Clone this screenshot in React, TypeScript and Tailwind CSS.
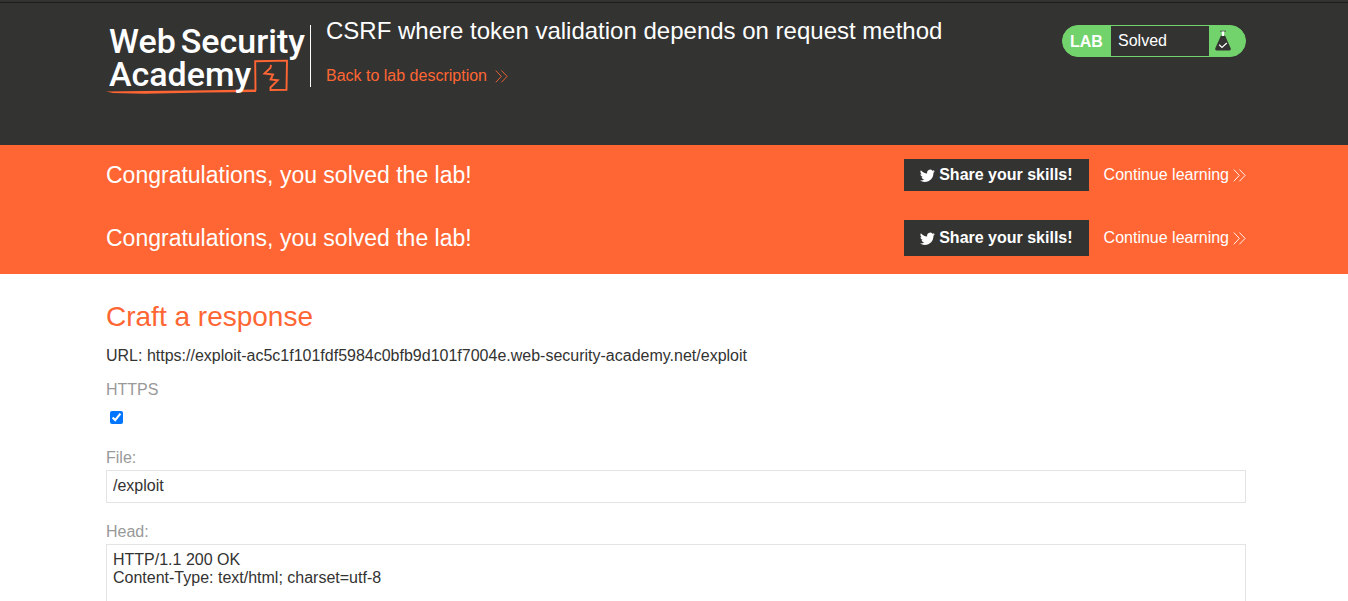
import React from "react";

function Chevrons({ className }: { className?: string }) {
  return (
    <svg
      viewBox="0 0 13 13"
      className={`h-[13px] w-[13px] ${className ?? ""}`}
      fill="none"
      stroke="currentColor"
      strokeWidth="0.9"
      aria-hidden="true"
    >
      <path d="M0.8 0.5 6.3 6.4 0.8 12.3M6.4 0.5 12.1 6.4 6.4 12.3" />
    </svg>
  );
}

function Bird() {
  return (
    <svg viewBox="0 0 24 24" className="h-[15px] w-[15px]" fill="currentColor" aria-hidden="true">
      <path d="M23.6 4.9c-.9.4-1.800.7-2.800.8 1-.6 1.800-1.600 2.200-2.700-1 .6-2 1-3.100 1.200a4.900 4.900 0 0 0-8.400 4.500C7.400 8.500 3.800 6.500 1.400 3.600.1 5.800.7 8.700 2.900 10.200c-.8 0-1.600-.2-2.200-.6-.1 2.300 1.600 4.400 3.900 4.900-.7.200-1.500.2-2.200.1.600 2 2.400 3.400 4.600 3.400-2.100 1.600-4.700 2.300-7.300 2C2.200 21.500 4.800 22.300 7.500 22.300c9.100 0 14.300-7.700 14-14.600.9-.7 1.700-1.600 2.100-2.800z" />
    </svg>
  );
}

function Flask() {
  return (
    <svg viewBox="0 0 18 22" className="h-[22px] w-[18px]" aria-hidden="true">
      <path d="M7 5.500h4l5.700 12.700c.4 1-.1 2.300-1.200 2.300h-13c-1.100 0-1.600-1.300-1.200-2.300z" fill="#333332" />
      <path d="M6 1.200h6" stroke="#555" strokeWidth="1" />
      <path d="M7.800 1.500h2.400v4.500H7.800z" fill="#fff" />
      <path d="m5.200 14.800 2.800 2.700 4.800-4.500" fill="none" stroke="#fff" strokeWidth="1.200" />
    </svg>
  );
}

function Logo() {
  return (
    <a
      href="#academy"
      aria-label="Web Security Academy"
      className="relative block w-[204px] pl-[3px] font-[Roboto,sans-serif] text-[34px] leading-[33px] font-medium text-white"
    >
      <svg
        viewBox="0 0 204 72"
        className="absolute top-0 left-0 h-[72px] w-[204px]"
        fill="none"
        stroke="#ff6633"
        aria-hidden="true"
      >
        <path d="M0 66.500 38 66 103 65.200 150 64.500V67L100 67.500 38 68.800 7 68z" fill="#ff6633" stroke="none" />
        <path d="M149.500 65.800 149.200 36.300 181 35.600 180.500 64.800 164.500 65 164.500 62.500 171.700 55.300 164.600 54.500 167 49.500 158.500 48.500 164.500 42.800 165 39.800" strokeWidth="1.900" />
      </svg>
      <span className="relative flex gap-[5px]">
        <span>Web</span>
        <span>Security</span>
      </span>
      <span className="relative block">Academy</span>
    </a>
  );
}

function Container({ children, className }: { children: React.ReactNode; className?: string }) {
  return (
    <div className="pl-1">
      <div className={`mx-auto max-w-[1140px] ${className ?? ""}`}>{children}</div>
    </div>
  );
}

function Solved({ tall }: { tall?: boolean }) {
  return (
    <div className="flex items-center justify-between">
      <p className="text-[23px] leading-8">Congratulations, you solved the lab!</p>
      <div className="flex items-center gap-[15px]">
        <button
          type="button"
          className={`flex items-center gap-1 bg-[#333332] px-4 font-bold ${tall ? "h-9" : "h-8"}`}
        >
          <Bird />
          Share your skills!
        </button>
        <a href="#continue" className="flex items-center gap-1">
          Continue learning
          <Chevrons />
        </a>
      </div>
    </div>
  );
}

export default function App() {
  return (
    <div className="h-screen overflow-hidden bg-white font-['Liberation_Sans',Arial,sans-serif] text-base leading-[18px] text-[#333332]">
      <header className="min-h-[145px] bg-[#333332] text-white">
        <div className="h-[3px] border-b border-[#1c1c1c]" />
        <Container className="flex items-start pt-[22px]">
          <Logo />
          <div className="h-[62px] w-px bg-white" />
          <div className="-mt-2 ml-[15px] flex-1">
            <h1 className="text-2xl leading-7">CSRF where token validation depends on request method</h1>
            <a href="#lab" className="mt-[22px] inline-flex items-center gap-2 text-[#ff6633]">
              Back to lab description
              <Chevrons />
            </a>
          </div>
          <div className="flex h-8 w-[184px] overflow-hidden rounded-full border border-[#72d36c] bg-[#72d36c]">
            <span className="flex w-12 items-center pt-0.5 pl-[7px] font-bold">LAB</span>
            <span className="flex flex-1 items-center bg-[#333332] pl-[7px]">Solved</span>
            <span className="flex w-9 items-center pl-[5px]">
              <Flask />
            </span>
          </div>
        </Container>
      </header>

      <section className="bg-[#ff6633] pt-3.5 pb-[18px] text-white">
        <Container className="flex flex-col gap-[29px]">
          <Solved />
          <Solved tall />
        </Container>
      </section>

      <main>
        <Container>
          <form onSubmit={(event) => event.preventDefault()}>
            <h2 className="pt-[27px] text-[28px] leading-8 text-[#ff6633]">Craft a response</h2>
            <p className="mt-[14px]">
              URL: https://exploit-ac5c1f101fdf5984c0bfb9d101f7004e.web-security-academy.net/exploit
            </p>
            <label htmlFor="https" className="mt-4 block text-[#999]">
              HTTPS
            </label>
            <input id="https" type="checkbox" defaultChecked className="mt-3 ml-1 block h-[13px] w-[13px]" />
            <label htmlFor="file" className="mt-[25px] block text-[#999]">
              File:
            </label>
            <input
              id="file"
              type="text"
              defaultValue="/exploit"
              className="mt-[3px] block h-[33px] w-full border border-[#e4e4e4] px-1.5 pb-0.5"
            />
            <label htmlFor="head" className="mt-5 block text-[#999]">
              Head:
            </label>
            <textarea
              id="head"
              rows={7}
              defaultValue={"HTTP/1.1 200 OK\nContent-Type: text/html; charset=utf-8"}
              className="mt-[3px] block w-full resize-none border border-[#e4e4e4] px-1.5 py-1.5"
            />
          </form>
        </Container>
      </main>
    </div>
  );
}
